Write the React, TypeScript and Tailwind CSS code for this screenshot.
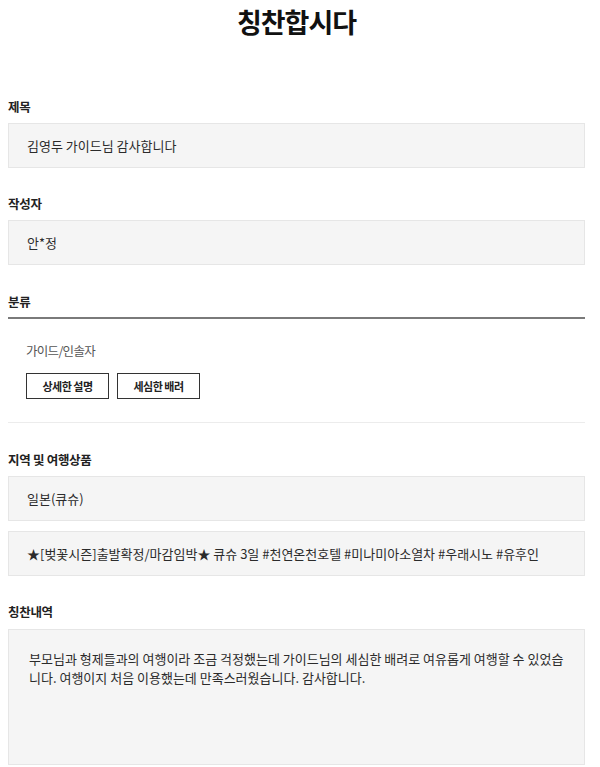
const font = {
  fontFamily: '"Noto Sans CJK KR", "Noto Sans", sans-serif',
};

const Label = ({ children }: { children: React.ReactNode }) => (
  <p className="text-[12.5px] font-bold leading-4 tracking-[-0.3px] text-[#222]">
    {children}
  </p>
);

const Field = ({ children }: { children: React.ReactNode }) => (
  <div className="flex h-[45px] items-center border border-[#e6e6e6] bg-[#f5f5f5] pl-[18px] text-[13px] text-[#2b2b2b]">
    {children}
  </div>
);

const App = () => {
  return (
    <div className="min-h-screen w-[600px] bg-white" style={font}>
      <div className="ml-2 w-[577px]">
        <h1 className="text-center text-[27px] font-bold leading-[44px] tracking-[-1px] text-[#111]">
          칭찬합시다
        </h1>

        <div className="mt-[55px]">
          <Label>제목</Label>
          <div className="mt-2">
            <Field>김영두 가이드님 감사합니다</Field>
          </div>
        </div>

        <div className="mt-[28px]">
          <Label>작성자</Label>
          <div className="mt-2">
            <Field>안*정</Field>
          </div>
        </div>

        <div className="mt-[29px]">
          <Label>분류</Label>
          <div className="mt-[7px] h-[2px] bg-[#7a7a7a]" />
          <div className="pl-[18px]">
            <p className="mt-6 text-[12.5px] leading-4 tracking-[-0.7px] text-[#555]">
              가이드/인솔자
            </p>
            <div className="mt-[14px] flex gap-2">
              <span className="flex h-[26px] w-[83px] items-center justify-center border border-[#333] text-[11px] font-bold tracking-[-0.5px] text-[#222]">
                상세한 설명
              </span>
              <span className="flex h-[26px] w-[83px] items-center justify-center border border-[#333] text-[11px] font-bold tracking-[-0.5px] text-[#222]">
                세심한 배려
              </span>
            </div>
          </div>
          <div className="mt-[23px] h-px bg-[#ececec]" />
        </div>

        <div className="mt-[29px]">
          <Label>지역 및 여행상품</Label>
          <div className="mt-2 flex flex-col gap-[10px]">
            <Field>일본(큐슈)</Field>
            <Field>
              ★[벚꽃시즌]출발확정/마감임박★ 큐슈 3일 #천연온천호텔 #미나미아소열차 #우래시노 #유후인
            </Field>
          </div>
        </div>

        <div className="mt-[28px]">
          <Label>칭찬내역</Label>
          <div className="mt-[9px] h-[136px] border border-[#e6e6e6] bg-[#f5f5f5] pl-[20px] pr-[14px] pt-[19px] text-[13px] leading-[19px] text-[#2b2b2b]">
            부모님과 형제들과의 여행이라 조금 걱정했는데 가이드님의 세심한 배려로 여유롭게 여행할 수 있었습니다. 여행이지 처음 이용했는데 만족스러웠습니다. 감사합니다.
          </div>
        </div>
      </div>
    </div>
  );
};

export default App;
